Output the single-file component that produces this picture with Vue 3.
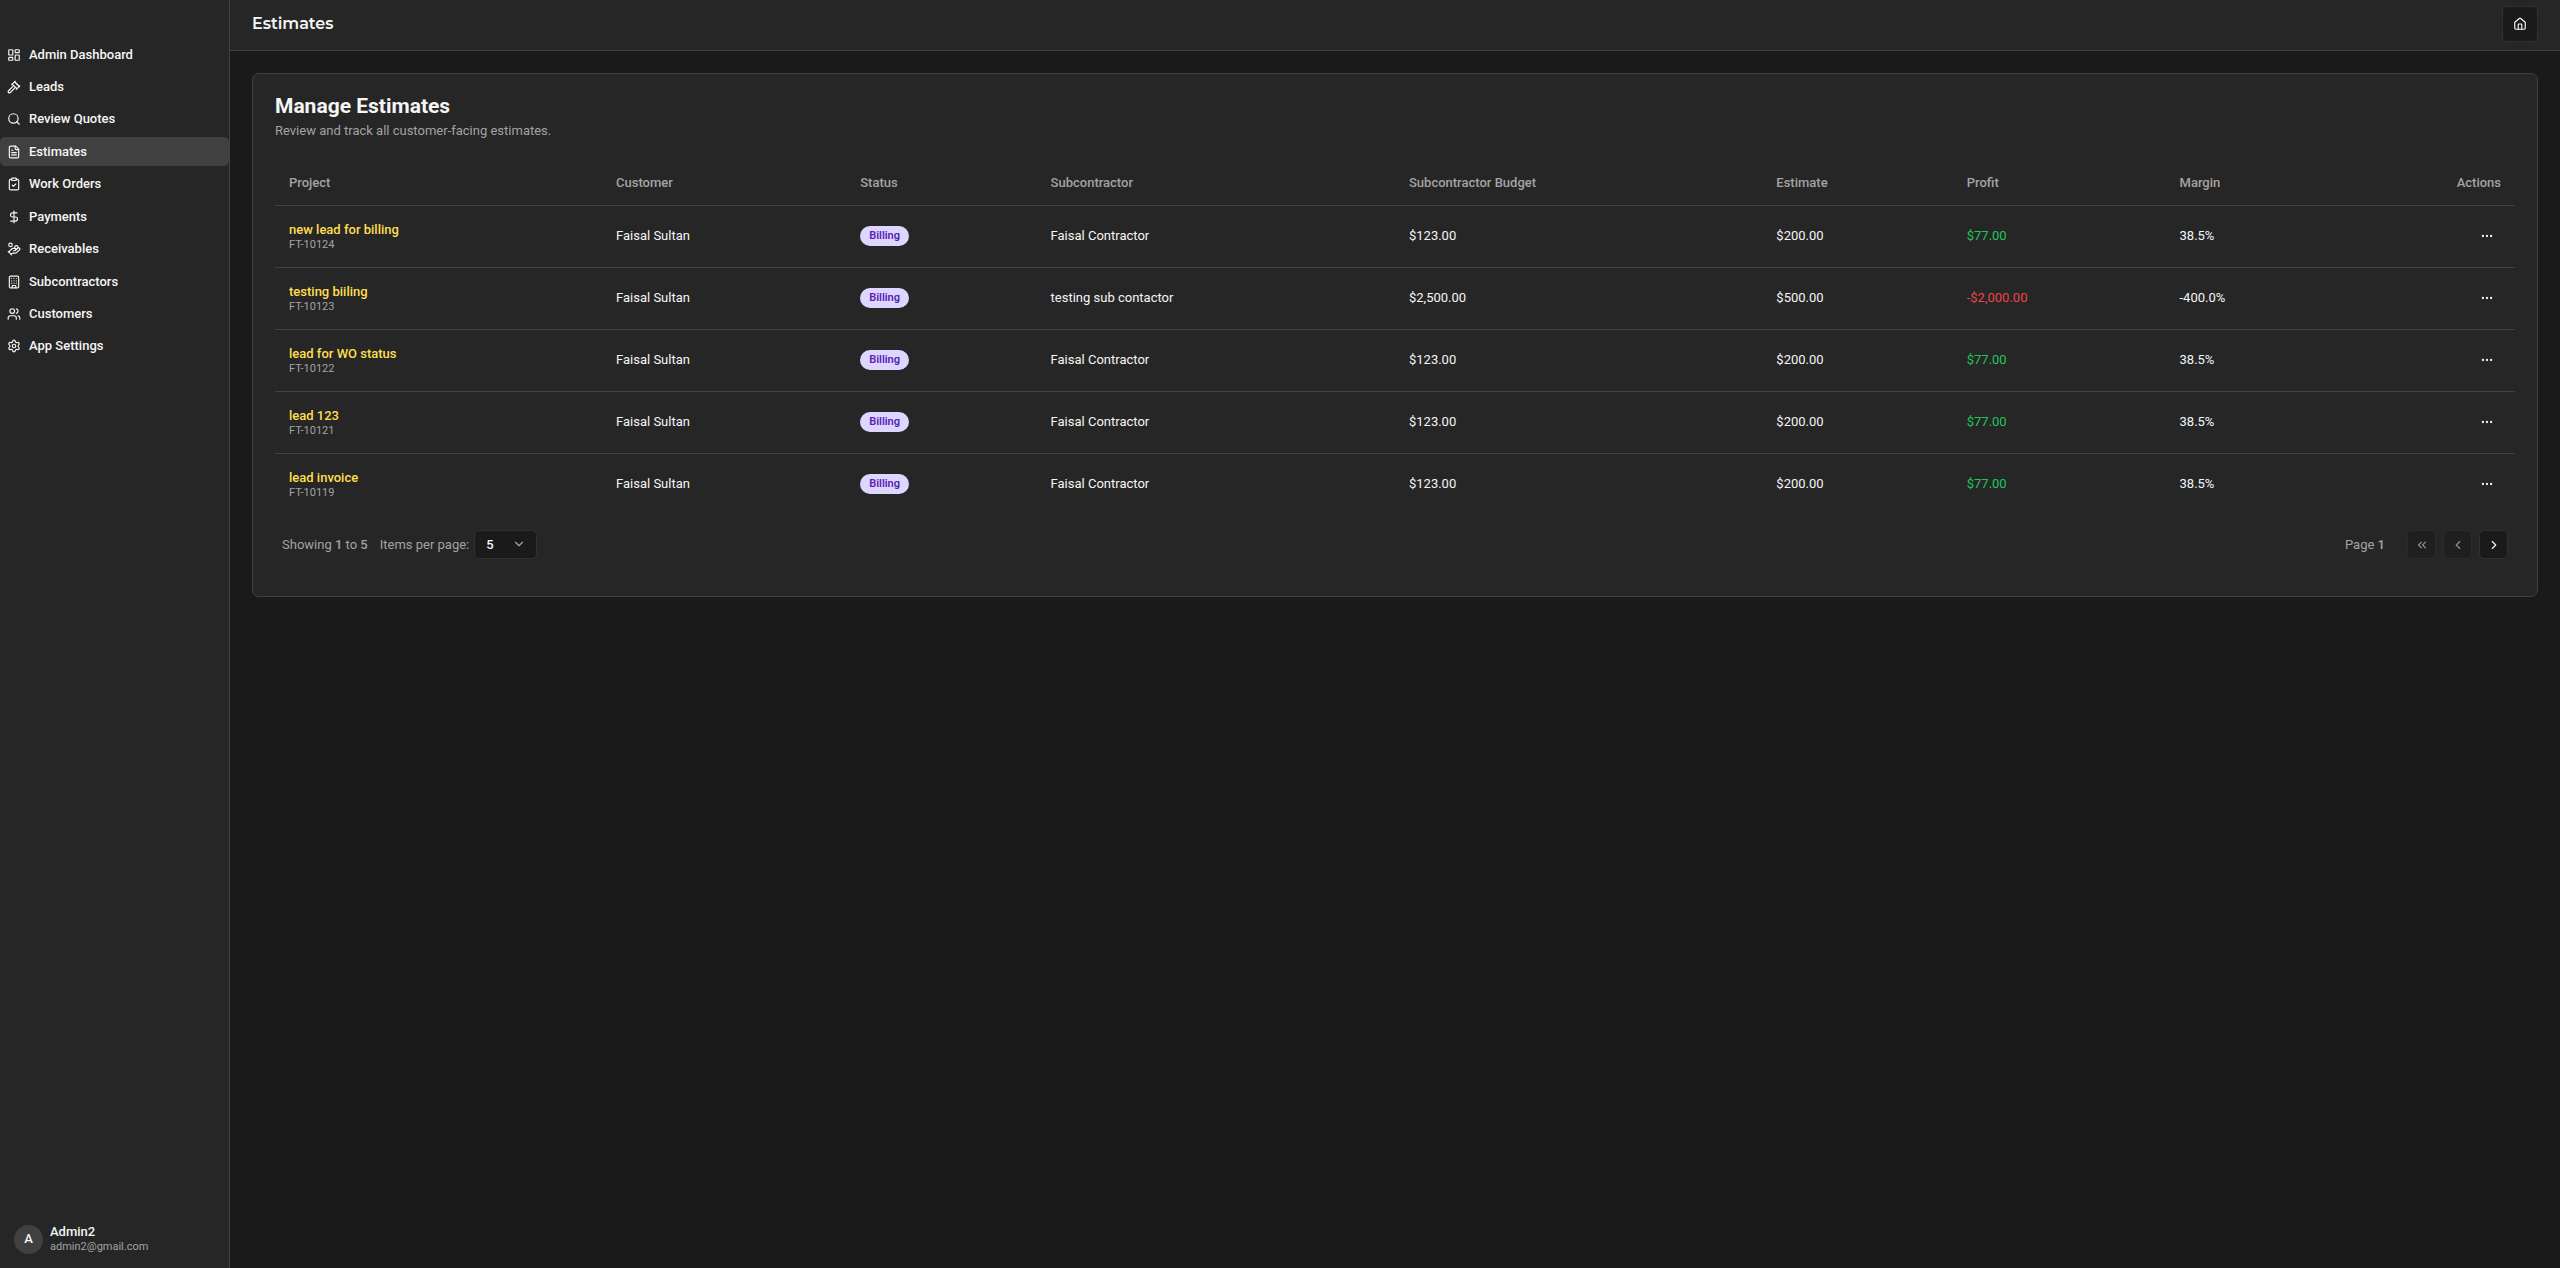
<template>
  <div class="layout">
    <aside class="sidebar">
      <nav class="nav">
        <a
          v-for="item in navItems"
          :key="item.label"
          href="#"
          class="nav-link"
          :class="{ active: item.label === currentPage }"
        >
          <svg class="icon" viewBox="0 0 24 24" aria-hidden="true">
            <path v-for="d in item.icon" :key="d" :d="d" />
          </svg>
          <span>{{ item.label }}</span>
        </a>
      </nav>

      <div class="user">
        <span class="avatar">A</span>
        <div class="user-info">
          <span class="user-name">Admin2</span>
          <span class="user-email">admin2@gmail.com</span>
        </div>
      </div>
    </aside>

    <div class="content">
      <header class="topbar">
        <h1 class="page-title">{{ currentPage }}</h1>
        <button type="button" class="home-button" aria-label="Home">
          <svg class="icon" viewBox="0 0 24 24" aria-hidden="true">
            <path d="M15 21v-8a1 1 0 0 0-1-1h-4a1 1 0 0 0-1 1v8" />
            <path
              d="M3 10a2 2 0 0 1 .709-1.528l7-5.999a2 2 0 0 1 2.582 0l7 5.999A2 2 0 0 1 21 10v9a2 2 0 0 1-2 2H5a2 2 0 0 1-2-2z"
            />
          </svg>
        </button>
      </header>

      <main class="main">
        <section class="card">
          <h2 class="card-title">Manage Estimates</h2>
          <p class="card-description">
            Review and track all customer-facing estimates.
          </p>

          <table class="table">
            <thead>
              <tr>
                <th class="col-project">Project</th>
                <th class="col-customer">Customer</th>
                <th class="col-status">Status</th>
                <th class="col-subcontractor">Subcontractor</th>
                <th class="col-budget">Subcontractor Budget</th>
                <th class="col-estimate">Estimate</th>
                <th class="col-profit">Profit</th>
                <th>Margin</th>
                <th class="col-actions">Actions</th>
              </tr>
            </thead>
            <tbody>
              <tr v-for="row in estimates" :key="row.id">
                <td>
                  <a href="#" class="project-name">{{ row.project }}</a>
                  <span class="project-id">{{ row.id }}</span>
                </td>
                <td>{{ row.customer }}</td>
                <td><span class="badge">{{ row.status }}</span></td>
                <td>{{ row.subcontractor }}</td>
                <td>{{ row.budget }}</td>
                <td>{{ row.estimate }}</td>
                <td :class="row.profit.startsWith('-') ? 'loss' : 'gain'">
                  {{ row.profit }}
                </td>
                <td>{{ row.margin }}</td>
                <td>
                  <button type="button" class="row-menu" aria-label="Open menu">
                    <svg class="icon" viewBox="0 0 24 24" aria-hidden="true">
                      <circle cx="12" cy="12" r="1" />
                      <circle cx="19" cy="12" r="1" />
                      <circle cx="5" cy="12" r="1" />
                    </svg>
                  </button>
                </td>
              </tr>
            </tbody>
          </table>

          <div class="pagination">
            <span>Showing <b>1</b> to <b>5</b></span>
            <div class="page-size">
              <label for="page-size">Items per page:</label>
              <div class="select-wrap">
                <select id="page-size" v-model="pageSize">
                  <option v-for="n in [5, 10, 20, 50]" :key="n" :value="n">
                    {{ n }}
                  </option>
                </select>
                <svg class="icon chevron" viewBox="0 0 24 24" aria-hidden="true">
                  <path d="m6 9 6 6 6-6" />
                </svg>
              </div>
            </div>
            <span class="page-number">Page <b>1</b></span>
            <div class="page-buttons">
              <button
                v-for="b in pageButtons"
                :key="b.label"
                type="button"
                :aria-label="b.label"
                :disabled="b.disabled"
              >
                <svg class="icon" viewBox="0 0 24 24" aria-hidden="true">
                  <path v-for="d in b.icon" :key="d" :d="d" />
                </svg>
              </button>
            </div>
          </div>
        </section>
      </main>
    </div>
  </div>
</template>

<script setup>
import { ref } from "vue";

const currentPage = "Estimates";
const pageSize = ref(5);

const navItems = [
  {
    label: "Admin Dashboard",
    icon: [
      "M4 3h5a1 1 0 0 1 1 1v7a1 1 0 0 1-1 1H4a1 1 0 0 1-1-1V4a1 1 0 0 1 1-1z",
      "M15 3h5a1 1 0 0 1 1 1v3a1 1 0 0 1-1 1h-5a1 1 0 0 1-1-1V4a1 1 0 0 1 1-1z",
      "M15 12h5a1 1 0 0 1 1 1v7a1 1 0 0 1-1 1h-5a1 1 0 0 1-1-1v-7a1 1 0 0 1 1-1z",
      "M4 16h5a1 1 0 0 1 1 1v3a1 1 0 0 1-1 1H4a1 1 0 0 1-1-1v-3a1 1 0 0 1 1-1z",
    ],
  },
  {
    label: "Leads",
    icon: [
      "m14 13-8.381 8.38a1 1 0 0 1-3.001-3L11 9.999",
      "m21.5 11.5-8-8",
      "m16 16 6-6",
      "m8 8 6-6",
      "m9 7 8 8",
      "m21 11-8-8",
    ],
  },
  {
    label: "Review Quotes",
    icon: ["m21 21-4.34-4.34", "M19 11a8 8 0 1 1-16 0 8 8 0 0 1 16 0z"],
  },
  {
    label: "Estimates",
    icon: [
      "M15 2H6a2 2 0 0 0-2 2v16a2 2 0 0 0 2 2h12a2 2 0 0 0 2-2V7Z",
      "M14 2v4a2 2 0 0 0 2 2h4",
      "M10 9H8",
      "M16 13H8",
      "M16 17H8",
    ],
  },
  {
    label: "Work Orders",
    icon: [
      "M9 2h6a1 1 0 0 1 1 1v2a1 1 0 0 1-1 1H9a1 1 0 0 1-1-1V3a1 1 0 0 1 1-1z",
      "M16 4h2a2 2 0 0 1 2 2v14a2 2 0 0 1-2 2H6a2 2 0 0 1-2-2V6a2 2 0 0 1 2-2h2",
      "m9 14 2 2 4-4",
    ],
  },
  {
    label: "Payments",
    icon: ["M12 2v20", "M17 5H9.5a3.5 3.5 0 0 0 0 7h5a3.5 3.5 0 0 1 0 7H6"],
  },
  {
    label: "Receivables",
    icon: [
      "M11 15h2a2 2 0 1 0 0-4h-3c-.6 0-1.1.2-1.4.6L3 17",
      "m7 21 1.6-1.4c.3-.4.8-.6 1.4-.6h4c1.1 0 2.1-.4 2.8-1.2l4.6-4.4a2 2 0 0 0-2.75-2.91l-4.2 3.9",
      "m2 16 6 6",
      "M18.9 9a2.9 2.9 0 1 1-5.8 0 2.9 2.9 0 0 1 5.8 0z",
      "M9 5a3 3 0 1 1-6 0 3 3 0 0 1 6 0z",
    ],
  },
  {
    label: "Subcontractors",
    icon: [
      "M6 2h12a2 2 0 0 1 2 2v16a2 2 0 0 1-2 2H6a2 2 0 0 1-2-2V4a2 2 0 0 1 2-2z",
      "M9 22v-4h6v4",
      "M8 6h.01",
      "M16 6h.01",
      "M12 6h.01",
      "M12 10h.01",
      "M12 14h.01",
      "M16 10h.01",
      "M16 14h.01",
      "M8 10h.01",
      "M8 14h.01",
    ],
  },
  {
    label: "Customers",
    icon: [
      "M16 21v-2a4 4 0 0 0-4-4H6a4 4 0 0 0-4 4v2",
      "M13 7a4 4 0 1 1-8 0 4 4 0 0 1 8 0z",
      "M22 21v-2a4 4 0 0 0-3-3.87",
      "M16 3.13a4 4 0 0 1 0 7.75",
    ],
  },
  {
    label: "App Settings",
    icon: [
      "M9.671 4.136a2.34 2.34 0 0 1 4.659 0 2.34 2.34 0 0 0 3.319 1.915 2.34 2.34 0 0 1 2.33 4.033 2.34 2.34 0 0 0 0 3.831 2.34 2.34 0 0 1-2.33 4.033 2.34 2.34 0 0 0-3.319 1.915 2.34 2.34 0 0 1-4.659 0 2.34 2.34 0 0 0-3.32-1.915 2.34 2.34 0 0 1-2.33-4.033 2.34 2.34 0 0 0 0-3.831A2.34 2.34 0 0 1 6.35 6.051a2.34 2.34 0 0 0 3.319-1.915",
      "M15 12a3 3 0 1 1-6 0 3 3 0 0 1 6 0z",
    ],
  },
];

const standard = {
  customer: "Faisal Sultan",
  status: "Billing",
  subcontractor: "Faisal Contractor",
  budget: "$123.00",
  estimate: "$200.00",
  profit: "$77.00",
  margin: "38.5%",
};

const estimates = [
  { ...standard, id: "FT-10124", project: "new lead for billing" },
  {
    ...standard,
    id: "FT-10123",
    project: "testing biiling",
    subcontractor: "testing sub contactor",
    budget: "$2,500.00",
    estimate: "$500.00",
    profit: "-$2,000.00",
    margin: "-400.0%",
  },
  { ...standard, id: "FT-10122", project: "lead for WO status" },
  { ...standard, id: "FT-10121", project: "lead 123" },
  { ...standard, id: "FT-10119", project: "lead invoice" },
];

const pageButtons = [
  {
    label: "First page",
    disabled: true,
    icon: ["m11 17-5-5 5-5", "m18 17-5-5 5-5"],
  },
  { label: "Previous page", disabled: true, icon: ["m15 18-6-6 6-6"] },
  { label: "Next page", disabled: false, icon: ["m9 18 6-6-6-6"] },
];
</script>

<style>
body {
  margin: 0;
  background: #1a1a1a;
}
</style>

<style scoped>
.layout {
  display: flex;
  min-height: 100vh;
  background: #1a1a1a;
  color: #f5f5f5;
  font-family: Roboto, "Liberation Sans", sans-serif;
  font-size: 13px;
  line-height: 18px;
}

.layout *,
.layout {
  box-sizing: border-box;
}

a {
  color: inherit;
  text-decoration: none;
}

button,
select {
  font: inherit;
  color: inherit;
  cursor: pointer;
}

.icon {
  display: block;
  flex-shrink: 0;
  width: 14px;
  height: 14px;
  fill: none;
  stroke: currentColor;
  stroke-width: 2;
  stroke-linecap: round;
  stroke-linejoin: round;
}

/* Sidebar */
.sidebar {
  display: flex;
  flex-direction: column;
  justify-content: space-between;
  flex-shrink: 0;
  width: 230px;
  padding-top: 40px;
  background: #262626;
  border-right: 1px solid #404040;
}

.nav {
  display: flex;
  flex-direction: column;
  justify-content: space-between;
  height: 321px;
}

.nav-link {
  display: flex;
  align-items: center;
  gap: 8px;
  height: 29px;
  padding: 0 7px;
  border-radius: 5px;
  font-weight: 500;
}

.nav-link.active {
  background: #404040;
}

.user {
  display: flex;
  align-items: center;
  gap: 7px;
  padding: 14px;
}

.avatar {
  display: flex;
  align-items: center;
  justify-content: center;
  width: 29px;
  height: 29px;
  border-radius: 50%;
  background: #404040;
  font-weight: 500;
}

.user-info {
  display: flex;
  flex-direction: column;
}

.user-name {
  line-height: 16px;
  font-weight: 500;
}

.user-email {
  font-size: 11px;
  line-height: 14px;
  color: #a3a3a3;
}

/* Content */
.content {
  flex: 1;
  min-width: 0;
}

.topbar {
  display: flex;
  align-items: center;
  justify-content: space-between;
  padding: 6px 22px 8px;
  background: #262626;
  border-bottom: 1px solid #404040;
}

.page-title {
  margin: 0;
  font-family: Montserrat, Inter, sans-serif;
  font-size: 16px;
  line-height: 24px;
  font-weight: 600;
}

.home-button {
  display: flex;
  align-items: center;
  justify-content: center;
  width: 36px;
  height: 36px;
  padding: 0;
  border: 1px solid #303030;
  border-radius: 5px;
  background: #1a1a1a;
}

.main {
  padding: 22px;
}

.card {
  padding: 22px;
  border: 1px solid #404040;
  border-radius: 7px;
  background: #262626;
}

.card-title {
  margin: 0;
  font-size: 21px;
  line-height: 20px;
  font-weight: 700;
}

.card-description {
  margin: 6px 0 22px;
  color: #a3a3a3;
}

/* Table */
.table {
  width: 100%;
  table-layout: fixed;
  border-collapse: collapse;
}

.table th {
  height: 43px;
  padding: 0 14px;
  color: #a3a3a3;
  font-weight: 500;
  text-align: left;
}

.table td {
  height: 62px;
  padding: 0 14px;
}

.table tr {
  border-bottom: 1px solid #404040;
}

.table tbody tr:last-child {
  border-bottom: 0;
}

.col-project {
  width: 14.6%;
}

.col-customer {
  width: 10.9%;
}

.col-status,
.col-estimate {
  width: 8.5%;
}

.col-subcontractor {
  width: 16%;
}

.col-budget {
  width: 16.4%;
}

.col-profit {
  width: 9.5%;
}

.table th.col-actions {
  text-align: right;
}

.project-name,
.project-id {
  display: block;
}

.project-name {
  color: #ffdf4f;
  line-height: 17px;
  font-weight: 500;
}

.project-id {
  color: #a3a3a3;
  font-size: 11px;
  line-height: 14px;
}

.badge {
  display: inline-block;
  padding: 0 9px;
  border-radius: 10px;
  background: #ddd6fe;
  color: #5b21b6;
  font-size: 11px;
  line-height: 20px;
  font-weight: 600;
}

.gain {
  color: #22c55e;
}

.loss {
  color: #ef4444;
}

.row-menu {
  display: flex;
  align-items: center;
  justify-content: center;
  width: 29px;
  height: 29px;
  margin-left: auto;
  padding: 0;
  border: 0;
  background: none;
}

/* Pagination */
.pagination {
  display: flex;
  align-items: center;
  gap: 12px;
  padding: 15px 7px;
  color: #a3a3a3;
}

.pagination b {
  font-weight: 500;
}

.page-size {
  display: flex;
  align-items: center;
  gap: 5px;
}

.select-wrap {
  position: relative;
}

.select-wrap select {
  display: block;
  width: 63px;
  height: 29px;
  padding: 0 11px;
  appearance: none;
  border: 1px solid #303030;
  border-radius: 5px;
  background: #1a1a1a;
  color: #f5f5f5;
  font-weight: 500;
}

.chevron {
  position: absolute;
  top: 7px;
  right: 11px;
  pointer-events: none;
}

.page-number {
  margin-left: auto;
}

.page-buttons {
  display: flex;
  gap: 7px;
  margin-left: 10px;
}

.page-buttons button {
  display: flex;
  align-items: center;
  justify-content: center;
  width: 29px;
  height: 29px;
  padding: 0;
  border: 1px solid #303030;
  border-radius: 5px;
  background: #1a1a1a;
  color: #f5f5f5;
}

.page-buttons button:disabled {
  opacity: 0.5;
  cursor: default;
}
</style>
